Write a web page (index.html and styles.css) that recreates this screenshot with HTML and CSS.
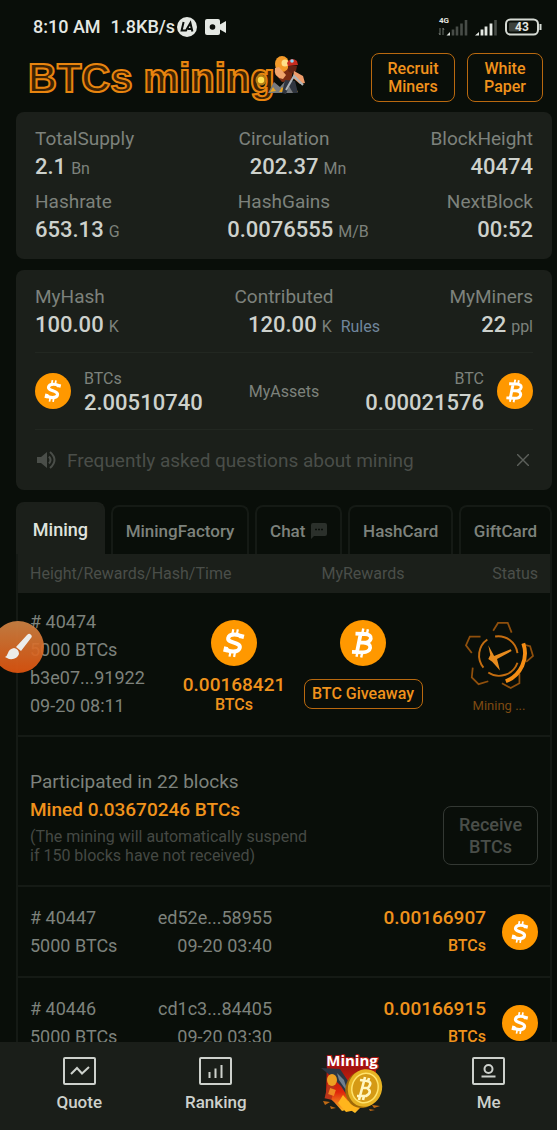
FILE: index.html
```html
<!DOCTYPE html>
<html lang="en">
<head>
<meta charset="utf-8">
<meta name="viewport" content="width=device-width, initial-scale=1">
<title>BTCs mining</title>
<link rel="stylesheet" href="styles.css">
</head>
<body>
<svg class="defs" aria-hidden="true">
  <defs>
    <symbol id="coin-s" viewBox="0 0 46 46">
      <circle cx="23" cy="23" r="23" fill="#ff9800"/>
      <g fill="none" stroke="#fff">
        <path d="M30.5 18.5 L31.5 14.2 M30.3 17.2 C28.5 13.8 18.2 12.8 17.2 18.2 C16.4 23.3 29.8 22 28.8 27.6 C27.8 33 17 32.2 15 28.5 M14 32 L15.2 26.8" stroke-width="4"/>
        <path d="M22.3 9.2 L21.4 14 M26.8 9.4 L25.9 14.4 M19.4 32 L18.5 36.6 M24 32 L23.1 37" stroke-width="2.2"/>
      </g>
    </symbol>
    <symbol id="coin-b" viewBox="0 0 46 46">
      <circle cx="23" cy="23" r="23" fill="#ff9800"/>
      <g fill="none" stroke="#fff">
        <path d="M15.5 13.6 L25 14 C34 14.6 32 22.6 23.5 22.6 L19 22.4 M23.5 22.6 C33.6 23.2 31.6 32.6 22.5 32.4 L12 31.8 M20.6 14 L17 32" stroke-width="3.8"/>
        <path d="M23.3 8.4 L22.3 13.6 M27.9 9.2 L26.9 14.2 M17.5 32 L16.5 36.8 M22.2 32.4 L21.2 37.4" stroke-width="2.4"/>
      </g>
    </symbol>
  </defs>
</svg>

<div class="app">
  <div class="statusbar">
    <span class="clock">8:10 AM</span>
    <span class="speed">1.8KB/s</span>
    <svg class="la" viewBox="0 0 20 20" aria-hidden="true"><circle cx="10" cy="10" r="10" fill="#e4e8e3"/><path d="M6.6 5 L4.6 13.6 H9 L13.4 6 L15.4 14.4 M11 12 H15" fill="none" stroke="#0a0e0a" stroke-width="2"/></svg>
    <svg class="cam" viewBox="0 0 21 16" aria-hidden="true"><rect width="15" height="16" rx="2" fill="#e4e8e3"/><path d="M14 6 L21 2 V14 L14 10Z" fill="#e4e8e3"/><circle cx="7.500" cy="8" r="2.800" fill="#0a0e0a"/></svg>
    <span class="spacer"></span>
    <svg class="signal" viewBox="0 0 30 20" aria-hidden="true"><text x="1" y="6" class="net">4G</text><path d="M2 11 V18 M1 16 L2 18 M5 18 V11 L6 13" stroke="#6b706b" fill="none"/><path d="M8.500 18.500 L12 15 V18.500Z" fill="#e4e8e3"/><path d="M15 18.500 V12.500 M19 18.500 V9.500 M23.500 18.500 V6.500 M28 18.500 V3" stroke="#474c47" stroke-width="2.600"/></svg>
    <svg class="signal2" viewBox="0 0 22 20" aria-hidden="true"><path d="M0 18.500 L4 15 V18.500Z" fill="#e4e8e3"/><path d="M7 18.500 V12.500 M11 18.500 V9.500 M16 18.500 V6.500" stroke="#e4e8e3" stroke-width="2.800"/><path d="M20.500 18.500 V3" stroke="#474c47" stroke-width="2.600"/></svg>
    <svg class="battery" viewBox="0 0 37 18" aria-hidden="true"><rect x="1" y="1.500" width="32" height="15" rx="4.500" fill="none" stroke="#d5dad4" stroke-width="2"/><rect x="4" y="4.500" width="11" height="9" rx="1" fill="#3d423c"/><path d="M35.500 6 V12" stroke="#d5dad4" stroke-width="2"/><text x="17" y="13" class="level">43</text></svg>
  </div>

  <header class="header">
    <h1 class="logo">BTCs mining</h1>
    <svg class="miner" viewBox="0 0 54 44" aria-hidden="true">
      <circle cx="6" cy="24" r="5.500" fill="#b77d14"/><circle cx="6" cy="24" r="3.200" fill="#ffdf4d"/>
      <path d="M13 37 L19 26 L25 31 L31 24 L42 37Z" fill="#777a7d"/>
      <path d="M15 36 l3-5 3 4 z M24 36 l3-5 4 5z M37 36 l3-5 3 5z" fill="#e9a51e"/>
      <path d="M21 10 L30 6 L38 14 L36 25 L27 26 L20 18Z" fill="#7b2b12"/>
      <ellipse cx="27" cy="8" rx="7" ry="8" fill="#f49a29"/><circle cx="30" cy="7" r="3.500" fill="#ffe08a"/>
      <path d="M20 12 Q18 21 28 23 L31 19 L24 11Z" fill="#f1a46c"/>
      <path d="M32 7 Q36 0 42 5 L43 9 L33 10Z" fill="#c92c1e"/><circle cx="37" cy="5" r="1.800" fill="#8fd6f5"/>
      <path d="M33 10 h9 l-1 5 q-4 4-8 0z" fill="#632313"/>
      <path d="M39 15 L48 20 L50 27 L45 28 L38 22Z" fill="#ee9c6b"/>
      <path d="M30 24 L40 25 L43 37 L38 37 L34 30 L31 38 L27 37Z" fill="#303640"/>
      <path d="M31 34 L39 20 L48 29" fill="none" stroke="#aeb4b8" stroke-width="2"/>
    </svg>
    <span class="spacer"></span>
    <button class="btn top-btn" type="button">Recruit<br>Miners</button>
    <button class="btn top-btn narrow" type="button">White<br>Paper</button>
  </header>

  <main class="main">
    <section class="card stats">
      <dl class="stat"><dt>TotalSupply</dt><dd>2.1<small>Bn</small></dd></dl>
      <dl class="stat mid"><dt>Circulation</dt><dd>202.37<small>Mn</small></dd></dl>
      <dl class="stat end"><dt>BlockHeight</dt><dd>40474</dd></dl>
      <dl class="stat"><dt>Hashrate</dt><dd>653.13<small>G</small></dd></dl>
      <dl class="stat mid"><dt>HashGains</dt><dd>0.0076555<small>M/B</small></dd></dl>
      <dl class="stat end"><dt>NextBlock</dt><dd>00:52</dd></dl>
    </section>

    <section class="card mine">
      <div class="stats-row">
        <dl class="stat"><dt>MyHash</dt><dd>100.00<small>K</small></dd></dl>
        <dl class="stat mid with-link"><dt>Contributed</dt><dd>120.00<small>K</small><a class="rules" href="#rules">Rules</a></dd></dl>
        <dl class="stat end"><dt>MyMiners</dt><dd>22<small>ppl</small></dd></dl>
      </div>
      <div class="assets">
        <svg class="coin" viewBox="0 0 46 46" aria-hidden="true"><use href="#coin-s"/></svg>
        <div class="asset"><span>BTCs</span><b>2.00510740</b></div>
        <span class="assets-title">MyAssets</span>
        <div class="asset end"><span>BTC</span><b>0.00021576</b></div>
        <svg class="coin" viewBox="0 0 46 46" aria-hidden="true"><use href="#coin-b"/></svg>
      </div>
      <div class="notice">
        <svg class="speaker" viewBox="0 0 20 20" aria-hidden="true"><path d="M1 7 H5 L11 2 V18 L5 13 H1Z" fill="#4a4e49"/><path d="M13 6.500 Q16 10 13 13.500 M14 2 Q23 10 14 18" fill="none" stroke="#4a4e49" stroke-width="2"/></svg>
        <a class="faq" href="#faq">Frequently asked questions about mining</a>
        <button class="close" type="button" aria-label="Close"><svg viewBox="0 0 12 12" aria-hidden="true"><path d="M0 0 L12 12 M12 0 L0 12" stroke="#5c605b" stroke-width="1.400"/></svg></button>
      </div>
    </section>

    <nav class="tabs">
      <button class="tab active" type="button">Mining</button>
      <button class="tab" type="button">MiningFactory</button>
      <button class="tab chat" type="button">Chat <svg viewBox="0 0 16 16" aria-hidden="true"><path d="M0 2 Q0 0 2 0 H14 Q16 0 16 2 V11 Q16 13 14 13 H3 L0 16Z" fill="#2b302b"/><path d="M4 6.500 h2 M7 6.500 h2 M10 6.500 h2" stroke="#0a0e0a" stroke-width="1.600"/></svg></button>
      <button class="tab" type="button">HashCard</button>
      <button class="tab" type="button">GiftCard</button>
    </nav>

    <table class="blocks">
      <thead>
        <tr class="grid4 head"><th class="wide">Height/Rewards/Hash/Time</th><th class="center">MyRewards</th><th class="right">Status</th></tr>
      </thead>
      <tbody>
        <tr class="grid4 current">
          <td class="lines"># 40474<br>5000 BTCs<br>b3e07...91922<br>09-20 08:11</td>
          <td class="reward"><svg class="coin-lg" viewBox="0 0 46 46" aria-hidden="true"><use href="#coin-s"/></svg><b class="amount">0.00168421</b><b class="unit">BTCs</b></td>
          <td class="reward giveaway"><svg class="coin-lg" viewBox="0 0 46 46" aria-hidden="true"><use href="#coin-b"/></svg><button class="btn" type="button">BTC Giveaway</button></td>
          <td class="status">
            <div class="status-box">
              <svg class="gear" viewBox="0 0 72 72" fill="none" aria-hidden="true">
                <g stroke="#8f4f0c" stroke-width="1.800">
                  <path d="M30 11 L35 3 L45 3 L49 13"/>
                  <path d="M17 17 L6 17 L2 26 L8 34"/>
                  <path d="M9 49 L8 59 L15 66 L25 63"/>
                  <path d="M39 65 L48 70 L57 65 L57 55"/>
                  <path d="M60 25 L68 27 L71 37 L64 43"/>
                </g>
                <g stroke="#c46d10" stroke-width="2">
                  <path d="M24 20 A20 20 0 0 0 20 49"/><path d="M32 17 A20 20 0 0 1 55 34"/><path d="M25 54 A20 20 0 0 0 55 44"/>
                </g>
                <path d="M61 24 A31 31 0 0 1 43 63" stroke="#f58d14" stroke-width="4"/>
                <path d="M25 26 L31 37 L48 30 L49 32 L34 40 L37 52 L29 43 L25 40 L27 36Z" fill="#e78b1e"/>
              </svg>
              <span>Mining ...</span>
            </div>
          </td>
        </tr>
        <tr class="summary">
          <td>
            <p class="joined">Participated in 22 blocks</p>
            <p class="joined mined">Mined 0.03670246 BTCs</p>
            <p class="hint">(The mining will automatically suspend<br>if 150 blocks have not received)</p>
          </td>
          <td><button class="btn receive" type="button" disabled>Receive<br>BTCs</button></td>
        </tr>
        <tr class="history">
          <td class="lines"># 40447<br>5000 BTCs</td>
          <td class="lines right">ed52e...58955<br>09-20 03:40</td>
          <td class="right"><b class="amount">0.00166907</b><b class="unit">BTCs</b></td>
          <td><svg class="coin" viewBox="0 0 46 46" aria-hidden="true"><use href="#coin-s"/></svg></td>
        </tr>
        <tr class="history">
          <td class="lines"># 40446<br>5000 BTCs</td>
          <td class="lines right">cd1c3...84405<br>09-20 03:30</td>
          <td class="right"><b class="amount">0.00166915</b><b class="unit">BTCs</b></td>
          <td><svg class="coin" viewBox="0 0 46 46" aria-hidden="true"><use href="#coin-s"/></svg></td>
        </tr>
      </tbody>
    </table>
  </main>

  <nav class="bottom">
    <a class="item" href="#quote"><svg class="glyph" viewBox="0 0 33 28" fill="none" stroke="#cdd1cc" stroke-width="2" aria-hidden="true"><rect x="1" y="1" width="31" height="26" rx="1"/><path d="M8 17 L14 11 L19 16.500 L26 10"/></svg>Quote</a>
    <a class="item" href="#ranking"><svg class="glyph" viewBox="0 0 33 28" fill="none" stroke="#cdd1cc" stroke-width="2" aria-hidden="true"><rect x="1" y="1" width="31" height="26" rx="1"/><path d="M10.500 21 V15 M16.500 21 V11.500 M22.500 21 V8"/></svg>Ranking</a>
    <a class="item" href="#mining">
      <svg class="mining-art" viewBox="-2 0 64 62" aria-label="Mining">
        <defs><linearGradient id="fire" x1="0" y1="0" x2="0" y2="1"><stop offset="0" stop-color="#8f1010"/><stop offset="0.600" stop-color="#e0260c"/><stop offset="1" stop-color="#ffc928"/></linearGradient></defs>
        <path d="M5 8 H54 V36 L48 50 L38 55 L33 60 L27 56 L20 58 L12 49 L4 42Z" fill="url(#fire)"/>
        <path d="M16 50 l5-8 5 6 6-4 4 9 8-2 -10 6 -10 2z" fill="#ffb51c"/>
        <path d="M1 48 l7 1 -5 3z M8 53 l6 2 -5 1z M50 52 l8 1 -6 2z M47 56 l6 1-5 1z" fill="#c06a15"/>
        <path d="M12 20 L6 46" stroke="#b9351a" stroke-width="7"/><path d="M11 36 L9 42" stroke="#ef8a22" stroke-width="6"/>
        <path d="M-1 15 L18 16 L26 28 L29 49 L19 33 L9 23Z" fill="#2b3643"/><path d="M15 20 L22 27 L26 40 L17 27Z" fill="#70808f"/>
        <ellipse cx="10" cy="27" rx="5" ry="6" fill="#eea022"/>
        <g transform="rotate(18 43 35)">
          <ellipse cx="41" cy="37" rx="17" ry="19" fill="#9f6907"/><ellipse cx="43" cy="35" rx="17" ry="19" fill="#e7b323"/><ellipse cx="43" cy="35" rx="13" ry="15" fill="#d59a15" stroke="#ffe36c" stroke-width="1.500"/>
        </g>
        <path d="M38 27 L45 28 Q51 29 46 35 L41 35 M45 35 Q51 39 44 43 L35 43 M42 28 L38 43 M43 24 L42 28 M47 25 L46 29 M38 43 L37 47 M42 43 L41 47" fill="none" stroke="#fff6c2" stroke-width="2.600"/>
        <text x="30" y="13" class="art-text">Mining</text>
      </svg>
    </a>
    <a class="item" href="#me"><svg class="glyph" viewBox="0 0 33 28" fill="none" stroke="#cdd1cc" stroke-width="2" aria-hidden="true"><rect x="1" y="1" width="31" height="26" rx="1"/><circle cx="16.500" cy="12" r="4"/><path d="M9.500 19.500 H23.500"/></svg>Me</a>
  </nav>

  <button class="brush" type="button" aria-label="Draw">
    <svg viewBox="0 0 52 52" aria-hidden="true"><path d="M38 13 Q41 15 39 17 L29 30 L24 26 L35 14 Q37 12 38 13Z" fill="#fff"/><path d="M22 27 Q27 28 27 33 Q25 39 17 38 L13 36 Q15 35 16 32 Q17 28 22 27Z" fill="#fff"/></svg>
  </button>
</div>
</body>
</html>
```
FILE: styles.css
```css
* { box-sizing: border-box; }

body {
  margin: 0;
  background: #090e09;
  color: #7d827c;
  font-family: Roboto, "Liberation Sans", sans-serif;
  font-size: 17px;
}

button { font-family: inherit; margin: 0; padding: 0; background: none; cursor: pointer; }
a { text-decoration: none; }
dl, dd, p, h1 { margin: 0; }
svg { display: block; flex: none; }
.defs { position: absolute; width: 0; height: 0; }
.spacer { flex: 1; }

.app {
  position: relative;
  display: flex;
  flex-direction: column;
  height: 100vh;
  overflow: hidden;
}

/* Device status bar */
.statusbar {
  display: flex;
  align-items: center;
  flex: none;
  height: 53px;
  padding: 0 15px 0 33px;
  color: #e4e8e3;
  font-size: 18px;
  font-weight: 500;
}
.clock { margin-right: 10px; }
.speed { margin-right: 2px; }
.la { width: 20px; height: 20px; }
.cam { width: 21px; height: 16px; margin-left: 8px; }
.signal { width: 30px; height: 20px; margin-right: 7px; }
.signal2 { width: 22px; height: 20px; margin-right: 8px; }
.battery { width: 37px; height: 18px; }
.net { font-size: 8px; font-weight: 700; fill: #e4e8e3; }
.level { font-size: 12px; font-weight: 700; fill: #e4e8e3; text-anchor: middle; }

/* Header */
.header {
  display: flex;
  align-items: center;
  flex: none;
  padding: 0 14px 10px 28px;
}
.logo {
  font: bold 40px/48px "Liberation Sans", Arial, sans-serif;
  color: #3d2303;
  -webkit-text-stroke: 2px #e8850f;
  white-space: nowrap;
}
.miner { width: 54px; height: 44px; margin-left: -20px; }

.btn {
  border: 1px solid #b9690f;
  border-radius: 8px;
  color: #f0921c;
  font-size: 16px;
  font-weight: 500;
  line-height: 18px;
}
.top-btn { width: 84px; height: 49px; }
.top-btn.narrow { width: 76px; margin-left: 12px; }

/* Cards */
.main { flex: 1; min-height: 0; overflow: hidden; padding: 0 5px 0 16px; }
.card { background: #1b1f1a; border-radius: 8px; padding: 13px 19px; margin-bottom: 11px; }
.stats, .stats-row { display: grid; grid-template-columns: 1fr 1fr 1fr; row-gap: 7px; }
.card.stats { padding-bottom: 15px; }
.card.mine { padding-bottom: 0; margin-bottom: 12px; }

.stat { line-height: 28px; font-size: 19px; white-space: nowrap; }
.stat dd { color: #cdd1cc; font-size: 22px; font-weight: 500; }
.stat small { margin-left: 5px; color: #7d827c; font-size: 16px; font-weight: 400; line-height: 1; }
.mid { text-align: center; }
.mid dd { padding-left: 28px; }
.with-link dd { padding-left: 32px; margin-right: -28px; }
.end { text-align: right; }
.rules { margin-left: 9px; color: #70869c; font-size: 16px; font-weight: 400; line-height: 1; }

.stats-row { padding-bottom: 13px; border-bottom: 1px solid #222721; }
.assets { display: flex; align-items: center; height: 77px; border-bottom: 1px solid #222721; }
.assets-title { font-size: 16px; }
.coin { width: 36px; height: 36px; }
.asset { flex: 1; padding: 0 13px; line-height: 24px; font-size: 16px; }
.asset span, .asset b { display: block; }
.asset b { color: #cdd1cc; font-size: 22px; font-weight: 500; }

.notice { display: flex; align-items: center; height: 60px; }
.speaker { width: 22px; height: 20px; margin-right: 10px; }
.faq { flex: 1; color: #4a4e49; font-size: 19px; }
.close { border: 0; padding: 4px; }
.close svg { width: 12px; height: 12px; }

/* Tabs */
.tabs { display: flex; align-items: flex-end; gap: 6px; }
.tab {
  flex: 1 1 auto;
  height: 49px;
  border: 2px solid #151a15;
  border-bottom: 0;
  border-radius: 8px 8px 0 0;
  padding: 0 10px;
  color: #7d827c;
  font-size: 17px;
  font-weight: 500;
  white-space: nowrap;
}
.tab.active { height: 52px; padding: 0 12px; background: #1b1f1a; border-color: #1b1f1a; color: #dfe3de; font-size: 18px; }
.chat { display: flex; align-items: center; justify-content: center; gap: 6px; }
.chat svg { width: 16px; height: 16px; }

/* Blocks */
.blocks, .blocks thead, .blocks tbody { display: block; }
.blocks { border: solid #151a15; border-width: 0 2px; }
.blocks td, .blocks th { display: block; padding: 0; font-weight: 400; text-align: left; }
.blocks tr { padding: 0 12px; border-bottom: 2px solid #151a15; }
.blocks .right { text-align: right; }
.blocks .center { text-align: center; }
.blocks b { display: block; font-weight: 500; color: #f0921c; }
.grid4 { display: grid; grid-template-columns: 139fr 130fr 128fr 111fr; }
.blocks .head { height: 39px; align-items: center; background: #1b1f1a; border: 0; color: #4a4e49; font-size: 16px; }
.wide { grid-column: span 2; }
.lines { font-size: 18px; line-height: 28px; white-space: nowrap; }

.blocks .current { padding-top: 15px; padding-bottom: 15px; }
.current .reward { display: flex; flex-direction: column; align-items: center; padding-top: 12px; }
.coin-lg { width: 46px; height: 46px; }
.amount { font-size: 19px; }
.unit { font-size: 16px; }
.current .amount { line-height: 22px; margin-top: 8px; }
.current .unit { line-height: 18px; }
.giveaway .btn { width: 119px; height: 30px; margin-top: 13px; white-space: nowrap; }
.status-box { width: 78px; margin-left: auto; padding-top: 12px; text-align: center; color: #7d4a12; font-size: 13px; line-height: 16px; }
.gear { width: 70px; height: 70px; margin: 0 auto 8px; }

.summary { display: flex; align-items: flex-end; justify-content: space-between; }
.blocks .summary { padding-top: 31px; padding-bottom: 20px; }
.joined { font-size: 19px; line-height: 28px; }
.mined { font-weight: 500; color: #f0921c; padding-bottom: 3px; }
.hint { font-size: 16px; line-height: 19px; color: #454944; }
.receive { width: 95px; height: 59px; border-color: #333833; color: #4a4e49; font-size: 18px; line-height: 22px; font-weight: 500; }

.history { display: grid; grid-template-columns: 121fr 121fr 214fr 52px; align-items: center; }
.blocks .history { padding-top: 17px; padding-bottom: 16px; }
.history b { line-height: 28px; }
.history .coin { margin-left: auto; }

/* Bottom navigation */
.bottom {
  display: grid;
  grid-template-columns: repeat(4, 1fr);
  flex: none;
  height: 88px;
  padding-left: 11px;
  background: #1a1e19;
}
.item {
  display: flex;
  flex-direction: column;
  align-items: center;
  gap: 6px;
  padding-top: 15px;
  color: #cdd1cc;
  font-size: 17px;
  font-weight: 500;
  line-height: 22px;
}
.glyph { width: 33px; height: 28px; }
.mining-art { width: 64px; height: 62px; margin-top: -4px; }
.art-text {
  font: bold 15px "Open Sans", "Noto Sans", sans-serif;
  fill: #fff;
  stroke: #b01414;
  stroke-width: 2px;
  paint-order: stroke;
  text-anchor: middle;
}

/* Floating draw control */
.brush {
  position: absolute;
  left: -8px;
  top: 621px;
  width: 52px;
  height: 52px;
  border: 0;
  border-radius: 50%;
  background: linear-gradient(#cf8445, #e2550f);
  opacity: 0.92;
}
```
